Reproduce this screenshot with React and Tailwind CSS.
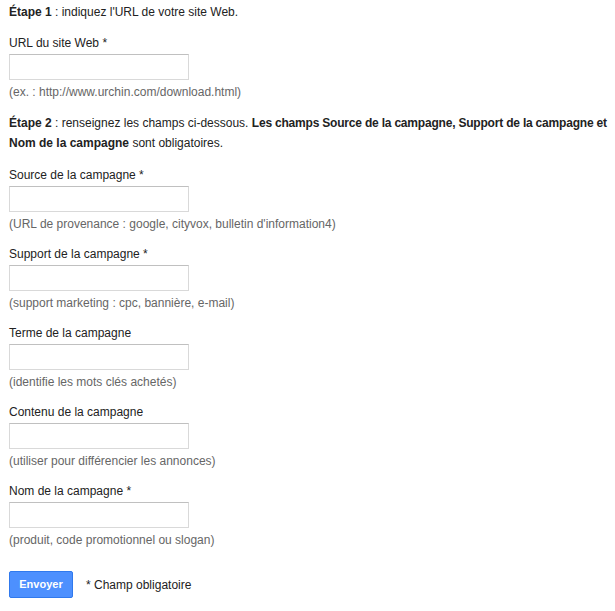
import React from "react";

const fields = [
  { label: "Source de la campagne *", hint: "(URL de provenance : google, cityvox, bulletin d'information4)" },
  { label: "Support de la campagne *", hint: "(support marketing : cpc, bannière, e-mail)" },
  { label: "Terme de la campagne", hint: "(identifie les mots clés achetés)" },
  { label: "Contenu de la campagne", hint: "(utiliser pour différencier les annonces)" },
  { label: "Nom de la campagne *", hint: "(produit, code promotionnel ou slogan)" },
];

const Field = ({ label, hint }) => (
  <div className="mb-[12px]">
    <label className="block leading-[18px] text-[#222]">{label}</label>
    <input
      type="text"
      className="mt-[2px] block h-[26px] w-[180px] border border-[#d9d9d9] border-t-[#c0c0c0] bg-white outline-none"
    />
    <div className="mt-[3px] leading-[18px] text-[#666]">{hint}</div>
  </div>
);

export default function App() {
  return (
    <div className="min-h-screen bg-white pl-[9px] pt-[3px] text-[12px] text-[#222] font-['Liberation_Sans',Arial,sans-serif]">
      <p className="leading-[18px]">
        <b>Étape 1</b> : indiquez l'URL de votre site Web.
      </p>

      <div className="mt-[13px]">
        <Field label="URL du site Web *" hint="(ex. : http://www.urchin.com/download.html)" />
      </div>

      <p className="mt-[6px] leading-[20px]">
        <b>Étape 2</b> : renseignez les champs ci-dessous.{" "}
        <b className="tracking-[-0.2px]">Les champs Source de la campagne, Support de la campagne et</b>
        <br />
        <b>Nom de la campagne</b> sont obligatoires.
      </p>

      <div className="mt-[13px]">
        {fields.map((f) => (
          <Field key={f.label} label={f.label} hint={f.hint} />
        ))}
      </div>

      <div className="mt-[22px] flex items-center gap-[13px]">
        <button className="h-[27px] w-[64px] rounded-[2px] border border-[#3079ed] bg-[#4d90fe] text-[11px] font-bold text-white">
          Envoyer
        </button>
        <span className="text-[12px] text-[#222]">* Champ obligatoire</span>
      </div>
    </div>
  );
}
